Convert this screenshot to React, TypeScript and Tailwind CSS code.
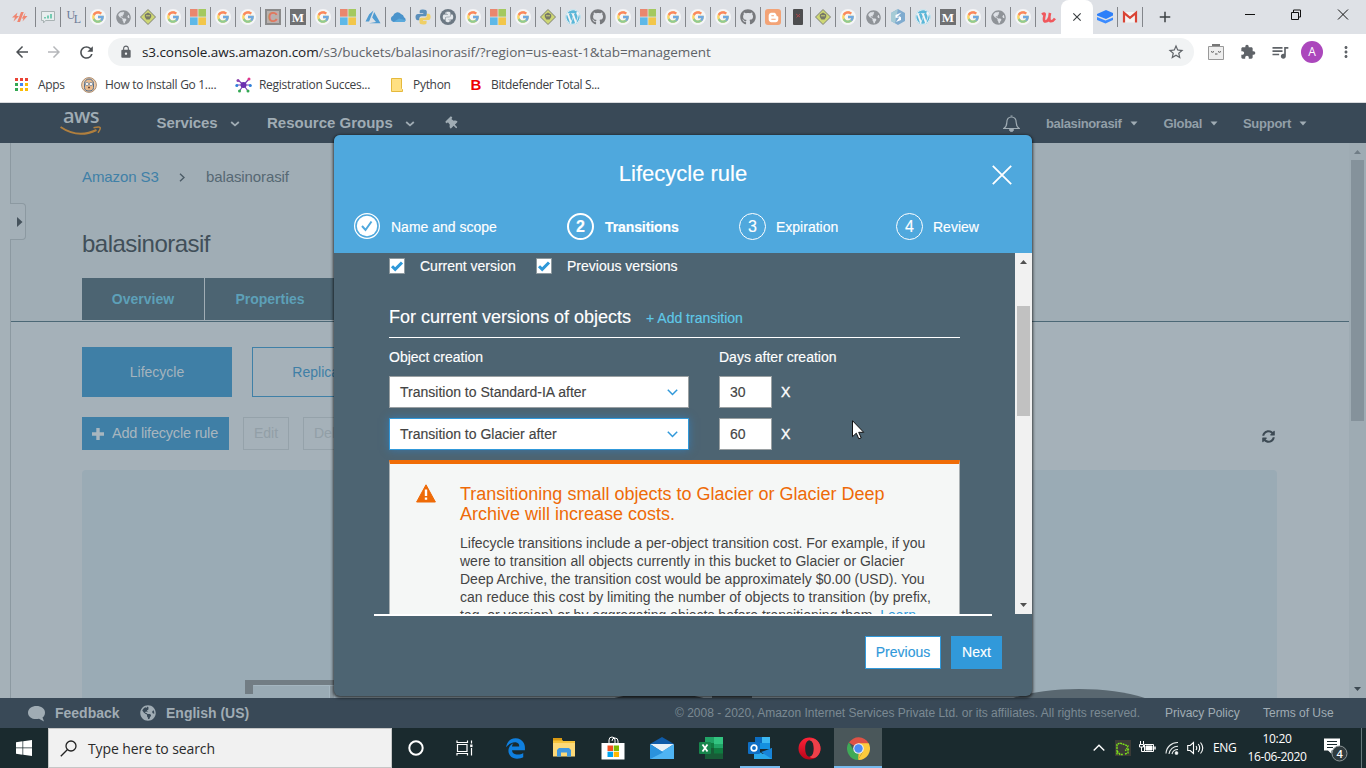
import React from "react";
import { FcGoogle } from "react-icons/fc";
import { FaWordpress, FaGithub, FaGlobeAmericas, FaBloggerB, FaThumbtack, FaPython, FaSyncAlt } from "react-icons/fa";
import { FaEdgeLegacy } from "react-icons/fa6";
import { MdExtension, MdQueueMusic, MdStarBorder, MdLock, MdArrowBack, MdArrowForward, MdRefresh, MdMoreVert, MdClose, MdAdd } from "react-icons/md";

const seg = "font-['Open_Sans','Noto_Sans',sans-serif]";

/* ---------- tab strip ---------- */

function Google() {
  return (
    <span className="flex h-4 w-4 items-center justify-center rounded-full bg-white/70">
      <FcGoogle size={14} className="opacity-60" />
    </span>
  );
}

function Windows() {
  return (
    <svg width="16" height="16" viewBox="0 0 16 16" className="opacity-70">
      <path fill="#f0603c" d="M0 0h7.6v7.6H0z" />
      <path fill="#8cbf26" d="M8.4 0H16v7.6H8.4z" />
      <path fill="#28a8ea" d="M0 8.4h7.6V16H0z" />
      <path fill="#fbbc09" d="M8.4 8.4H16V16H8.4z" />
    </svg>
  );
}

function Sign() {
  return (
    <svg width="16" height="16" viewBox="0 0 16 16" className="opacity-75">
      <path d="M8 .5 15.500 8 8 15.500.5 8z" fill="#c9d44e" stroke="#5f6050" strokeWidth="1" />
      <path d="M4.800 5.500 8 3.600l3.200 1.900V8L9.600 10.500H6.400L4.800 8z" fill="#55563f" />
      <path d="M6 6.800h4M7 12h2" stroke="#c9d44e" strokeWidth="1" />
    </svg>
  );
}

const Globe = () => <FaGlobeAmericas size={15} className="text-[#8f9398]" />;
const Medium = () => (
  <span className="flex h-4 w-4 items-center justify-center bg-[#6f7072] font-['Liberation_Serif',serif] text-[13px] leading-none font-bold text-white">M</span>
);
const Wp = () => <FaWordpress size={16} className="rounded-full bg-white/60 text-[#5bb7d8]" />;
const Git = () => <FaGithub size={16} className="text-[#77797d]" />;

function Favicon({ kind }: { kind: string }) {
  switch (kind) {
    case "g": return <Google />;
    case "ms": return <Windows />;
    case "sign": return <Sign />;
    case "globe": return <Globe />;
    case "m": return <Medium />;
    case "wp": return <Wp />;
    case "gh": return <Git />;
    case "slash":
      return (
        <svg width="16" height="16" viewBox="0 0 16 16" className="-ml-1.5" fill="#ef8570"><path d="M0 8.500 5.500 3.500 4.500 7H7L1.500 12.500 3 8.500zM9 3h2.800L8 13H5.200zM13.500 3.500 12.500 7H15.500L10.500 12.500 11.500 9.500H9.800z" /></svg>
      );
    case "chart":
      return (
        <svg width="16" height="16" viewBox="0 0 16 16" fill="none"><path d="M1.500 2.500h13v9h-9l-2 2.500v-2.500h-2z" fill="#e8eeee" stroke="#a9b3b4" /><path d="M5 9.500V8M8 9.500V6.500M11 9.500V5" stroke="#58c2a3" strokeWidth="1.600" /></svg>
      );
    case "ul":
      return (
        <span className="flex font-['Liberation_Serif',serif] text-[12px] leading-none tracking-[-1.5px] text-[#6d7a96]"><span>U</span><span className="pt-1">L</span></span>
      );
    case "c":
      return <span className="flex h-4 w-4 items-center justify-center border-2 border-[#8b8b8b] bg-[#b9b0ae] text-[14px] leading-none font-bold text-[#df7a60]">C</span>;
    case "azure":
      return (
        <svg width="16" height="16" viewBox="0 0 16 16"><path d="M8.500 1.500 4.200 5.300.5 12.500h3.600zM9.200 3l-2 5.400 3.800 4.500-7 1.300h11.500z" fill="#4f9bd1" /></svg>
      );
    case "cloud":
      return (
        <svg width="17" height="16" viewBox="0 0 17 16"><path d="M3.500 13a3.200 3.200 0 0 1-.4-6.200A4.600 4.600 0 0 1 11 4.900a4 4 0 0 1 3 3.300A2.600 2.600 0 0 1 14 13z" fill="#4a93cb" /><path d="M3.500 13 9 9.500l6.800 1.800A2.600 2.600 0 0 1 14 13z" fill="#5aa9dc" /></svg>
      );
    case "py":
      return (
        <svg width="16" height="16" viewBox="0 0 16 16"><path d="M8 .5c-3 0-3.300 1-3.300 2V4.300h3.600v.6H3C1.500 4.900.5 6 .5 8s1 3.300 2.300 3.300h1.600V9.500c0-1.300 1-2.200 2.200-2.200h3.500c1 0 1.700-.8 1.700-1.800v-3C11.800 1.200 10.500.5 8 .5z" fill="#5b8fba" /><path d="M8.300 15.500c3 0 3.300-1 3.300-2v-1.800H8v-.6h5.200c1.400 0 2.400-1 2.400-3.100 0-2-1-3.200-2.300-3.200h-1.500v1.700c0 1.300-1 2.300-2.200 2.300H6.200c-1 0-1.700.8-1.700 1.800v3c0 1.200 1.300 1.900 3.800 1.900z" fill="#efcf66" /></svg>
      );
    case "pyround":
      return <span className="flex h-4 w-4 items-center justify-center rounded-full bg-[#6c7883] text-[#e4e8ec]"><FaPython size={12} /></span>;
    case "blog":
      return <span className="flex h-4 w-4 items-center justify-center rounded-[3px] bg-[#f3a376] text-white"><FaBloggerB size={11} /></span>;
    case "phone":
      return (
        <svg width="16" height="16" viewBox="0 0 16 16"><rect x="3" y="0" width="10" height="16" rx="1" fill="#4d4d4f" /><path d="m6 5 4 3M10 5 6.500 8.500" stroke="#a8494c" /></svg>
      );
    case "hex":
      return (
        <svg width="16" height="16" viewBox="0 0 16 16"><path d="m8 0 7 4v8l-7 4-7-4V4z" fill="#7fabcf" /><path d="M8 0 1 4v8l4 2.200z" fill="#a5cbd6" /><path d="M11.500 3.500 5.500 6v2.800l5-1.800-4.500 6L11 11V8l-5 1z" fill="#fff" /></svg>
      );
    default:
      return (
        <svg width="16" height="16" viewBox="0 0 16 16"><path d="M2 5.500C4 4 5 4 4.600 6S3 12.500 5.500 12.500 9.500 9 10 4c-1 5-.8 8.300 1 8.300S14 11 15 9.500" fill="none" stroke="#f0585d" strokeWidth="2.600" /></svg>
      );
  }
}

const tabs = "slash chart ul g globe sign g ms g g c m g ms azure cloud py pyround g ms g sign wp gh g ms g g g gh blog phone sign g globe hex wp m g globe g u".split(" ");

function TabStrip() {
  return (
    <div className="flex h-[34px] w-full bg-[#dee1e6] pl-[11px]">
      {tabs.map((k, i) => (
        <div key={i} className="flex h-[34px] w-[25px] shrink-0 items-center">
          <div className="flex flex-1 items-center justify-center">
            <Favicon kind={k} />
          </div>
          <div className={i === tabs.length - 1 ? "w-px" : "h-5 w-px bg-[#83868b]"} />
        </div>
      ))}
      <div className="flex h-[34px] w-8 shrink-0 items-center justify-center rounded-t-lg bg-white">
        <MdClose size={14} className="text-[#3c4043]" />
      </div>
      <div className="flex w-[25px] items-center">
        <svg width="24" height="18" viewBox="0 0 24 18"><path d="M4 6 13 2l7 3v2.500l-7 3.500-9-3.500z" fill="#2d7ff9" /><path d="m4 9 8.500 3.500L20 9.500v2.500l-7.500 3.500L4 12z" fill="#3b8bff" /></svg>
        <div className="h-5 w-px bg-[#83868b]" />
      </div>
      <div className="flex w-[25px] items-center">
        <svg width="24" height="16" viewBox="0 0 24 16"><path d="M5 3h14v10.500H5z" fill="#f3f3f3" /><path d="M6 13.500V3.800l6 5 6-5v9.700" fill="none" stroke="#d94334" strokeWidth="2.200" /></svg>
        <div className="h-5 w-px bg-[#83868b]" />
      </div>
      <div className="flex w-[44px] items-center justify-center"><MdAdd size={18} className="text-[#3c4043]" /></div>
      <div className="flex flex-1 justify-end pr-[17px]">
        <svg width="104" height="30" viewBox="0 0 104 30" fill="none" stroke="#111" strokeWidth="1">
          <path d="M0 14.500h10M46.500 12.500h7v7h-7zM48.500 12v-2h7v7h-2M93 9.500l10 10M103 9.500l-10 10" />
        </svg>
      </div>
    </div>
  );
}

function Toolbar() {
  return (
    <div className="flex h-9 w-full items-center bg-white text-[#5f6368]">
      <div className="flex w-[108px] items-center gap-[14px] pl-[13px]">
        <MdArrowBack size={18} className="text-[#4c5054]" />
        <MdArrowForward size={18} className="text-[#b5b7ba]" />
        <MdRefresh size={19} className="text-[#4c5054]" />
      </div>
      <div className="flex h-7 w-[1086px] items-center rounded-full bg-[#f1f3f4] pr-[9px] pl-[11px]">
        <MdLock size={14} />
        <div className={`flex-1 pl-[9px] text-[13.5px] tracking-[-0.075px] whitespace-nowrap ${seg}`}>
          <span className="text-[#202124]">s3.console.aws.amazon.com</span>/s3/buckets/balasinorasif/?region=us-east-1&amp;tab=management
        </div>
        <MdStarBorder size={18} />
      </div>
      <div className="flex flex-1 items-center pl-[14px]">
        <svg width="16" height="16" viewBox="0 0 16 16" fill="none"><path d="M4 1h8" stroke="#777" strokeWidth="2" /><path d="M.5 2.500h15v13H.5z" fill="#eee" stroke="#999" /><path d="M3 7.500q1.500 1.500 3 0M10 7.500q1.500 1.500 3 0M7 10h2.500" stroke="#555" /></svg>
        <MdExtension size={16} className="ml-4" />
        <MdQueueMusic size={20} className="ml-[14px]" />
        <span className={`ml-[11px] flex h-[22px] w-[22px] items-center justify-center rounded-full bg-[#ab47bc] text-[12px] text-white ${seg}`}>A</span>
        <MdMoreVert size={18} className="ml-[14px]" />
      </div>
    </div>
  );
}

function Bookmarks() {
  return (
    <div className={`flex h-[33px] w-full items-center border-b border-[#d8dadd] bg-white pb-[3px] text-[12px] tracking-[-0.3px] whitespace-nowrap text-[#3c4043] ${seg}`}>
      <div className="flex w-[81px] items-center pl-[15px]">
        <svg width="13" height="13" viewBox="0 0 13 13">
          <path fill="#ea4335" d="M0 0h3v3H0zM5 0h3v3H5zM10 0h3v3h-3z" />
          <path fill="#34a853" d="M0 5h3v3H0zM0 10h3v3H0z" />
          <path fill="#4285f4" d="M5 5h3v3H5z" />
          <path fill="#fbbc05" d="M10 5h3v3h-3zM5 10h3v3H5zM10 10h3v3h-3z" />
        </svg>
        <span className="pl-[10px]">Apps</span>
      </div>
      <div className="flex w-[154px] items-center">
        <svg width="16" height="16" viewBox="0 0 16 16"><circle cx="8" cy="8" r="7.400" fill="#f0cfae" stroke="#b08f70" /><path d="M3.500 6.500a4.500 4.500 0 0 1 9 0v4a4.500 3.500 0 0 1-9 0z" fill="#e8b98c" stroke="#54708f" /><circle cx="6" cy="7" r="1.600" fill="#fff" stroke="#54708f" strokeWidth=".6" /><circle cx="10" cy="7" r="1.600" fill="#fff" stroke="#54708f" strokeWidth=".6" /><path d="M7 10.500h2" stroke="#6c4a36" strokeWidth="1.300" /></svg>
        <span className="pl-2">How to Install Go 1....</span>
      </div>
      <div className="flex w-[154px] items-center">
        <svg width="17" height="16" viewBox="0 0 17 16" strokeWidth="1.200"><path d="M8.500 8 3 3M8.500 8 14 2M8.500 8H1.500M8.500 8h7M8.500 8l-4 6M8.500 8l4.500 6" stroke="#7a3bb5" /><circle cx="8.500" cy="8" r="3" fill="#6b2fb0" /><circle cx="14" cy="2" r="1.500" fill="#e0358a" /><circle cx="3" cy="3.500" r="1.500" fill="#8e44ad" /><circle cx="1.800" cy="8.500" r="1.500" fill="#2f80d9" /><circle cx="15.300" cy="8.500" r="1.500" fill="#2f80d9" /><circle cx="4.500" cy="14" r="1.500" fill="#32a852" /><circle cx="13" cy="14" r="1.500" fill="#32a852" /></svg>
        <span className="pl-[7px]">Registration Succes...</span>
      </div>
      <div className="flex w-[79px] items-center">
        <svg width="15" height="16" viewBox="0 0 15 16"><path d="M2.500 1.500h10v10l1 1v2h-11z" fill="#ffe082" stroke="#e5b93c" /></svg>
        <span className="pl-[9px]">Python</span>
      </div>
      <div className="flex items-center">
        <span className="w-4 text-center font-['Liberation_Sans',sans-serif] text-[15px] leading-4 font-black tracking-normal text-[#ed0000]">B</span>
        <span className="pl-[7px] tracking-[-0.35px]">Bitdefender Total S...</span>
      </div>
    </div>
  );
}

/* ---------- console ---------- */

const Caret = () => <svg width="8" height="5" viewBox="0 0 8 5"><path d="M.5.500h7L4 4.500z" fill="#a0acb4" /></svg>;
const Vee = () => <svg width="10" height="6" viewBox="0 0 10 6"><path d="m1.200 1 3.800 3.400L8.800 1" fill="none" stroke="#a0acb4" strokeWidth="1.800" /></svg>;

function AwsNav() {
  return (
    <div className="flex h-10 w-full shrink-0 items-center bg-[#394957] font-bold text-[#a0acb4]">
      <div className="flex w-[156.5px] flex-col pl-[60px]">
        <span className="h-[17px] w-[42px] text-center font-['Open_Sans',sans-serif] text-[20px] leading-[14px] font-semibold tracking-[-0.5px]">aws</span>
        <svg width="42" height="11" viewBox="0 0 42 11"><path d="M.5 1C13 9.500 26 9 36.500 4" stroke="#b07f3e" strokeWidth="2" fill="none" /><path d="M33.500 1.800c4-1 6-1 6.500-.3s-.3 3-2 5.200" stroke="#b07f3e" strokeWidth="1.600" fill="none" /></svg>
      </div>
      <span className="w-[61.500px] text-[15px] tracking-[-0.1px]">Services</span>
      <span className="w-[49px] pt-px pl-[12px]"><Vee /></span>
      <span className="w-[126px] text-[15px]">Resource Groups</span>
      <span className="w-[53px] pt-px pl-[12px]"><Vee /></span>
      <FaThumbtack size={13} className="-rotate-45" />
      <div className="flex flex-1 items-center justify-end pt-px pr-[59px] text-[13px] font-bold text-[#929fa8]">
        <svg width="17" height="17" viewBox="0 0 17 17" fill="none" className="mr-[26px]"><path d="M.8 13.500h15.400c-2-1.500-3-3-3-6C13.200 4 11.500 2 8.500 2S3.800 4 3.800 7.500c0 3-1 4.500-3 6z" stroke="#a0acb4" strokeWidth="1.200" /><path d="M6.500 14.500h4a2 2 0 0 1-4 0zM7.500 1h2" fill="#a0acb4" stroke="#a0acb4" /></svg>
        <span className="mr-2 tracking-[-0.35px]">balasinorasif</span><Caret />
        <span className="mr-2 ml-[26px] tracking-[-0.35px]">Global</span><Caret />
        <span className="mr-2 ml-[25px] tracking-[-0.25px]">Support</span><Caret />
      </div>
    </div>
  );
}

function ConsoleBody() {
  return (
    <div className="flex h-[555px] w-full shrink-0 bg-[#a5b1b9]">
      <div className="relative w-[11px] border-r border-[#8c99a1] bg-[#a5b1b8]">
        <div className="absolute top-[60px] left-[10px] flex h-[37px] w-4 items-center justify-center rounded-r border border-l-0 border-[#8c99a1] bg-[#a3afb7]">
          <svg width="6" height="10" viewBox="0 0 6 10" className="ml-1"><path d="M0 0v10l5.500-5z" fill="#45525c" /></svg>
        </div>
      </div>
      <div className="flex w-[1338px] flex-col overflow-hidden">
        <div className="flex h-[179px] shrink-0 flex-col border-b border-[#4c6876] bg-[#a0adb5] pl-[71px]">
          <div className="mt-[24px] flex h-5 items-center text-[15px] text-[#566873]">
            <span className="w-[77px] tracking-[-0.1px] whitespace-nowrap text-[#3f80a7]">Amazon S3</span>
            <svg width="6" height="9" viewBox="0 0 6 9" className="mr-[21px] ml-5"><path d="m1 .8 4 3.700-4 3.700" fill="none" stroke="#4b5b66" strokeWidth="1.400" /></svg>
            <span className="tracking-[-0.1px]">balasinorasif</span>
          </div>
          <div className="mt-[42px] h-[30px] text-[24px] leading-[30px] tracking-[-0.52px] text-[#414f59]">balasinorasif</div>
          <div className="mt-[19px] flex h-[42px] gap-px text-[14px] font-bold text-[#5da0b8]">
            <div className="flex w-[122px] items-center justify-center bg-[#4c6472]">Overview</div>
            <div className="flex w-[130px] items-center justify-center bg-[#4c6472]">Properties</div>
            <div className="w-[130px] bg-[#4c6472]" />
          </div>
        </div>
        <div className="flex flex-1 flex-col pl-[71px]">
          <div className="mt-[25px] flex h-[50px] gap-5 pt-0 text-[14px]">
            <div className="flex w-[150px] items-center justify-center bg-[#3f7fa6] pt-px text-[#a5b4bd]">Lifecycle</div>
            <div className="flex w-[150px] items-center justify-center border border-[#3f80a7] text-[#3f7fa6]">Replication</div>
          </div>
          <div className="mt-5 flex h-[33px] items-center text-[14.5px] text-[#929fa7]">
            <div className="flex h-[33px] w-[147px] items-center bg-[#3f7fa6] pl-[10px] tracking-[-0.2px] whitespace-nowrap text-[#a8b6bf]">
              <svg width="12" height="12" viewBox="0 0 12 12" className="mr-2"><path d="M6 0v12M0 6h12" stroke="#a8b6bf" strokeWidth="3.400" /></svg>
              Add lifecycle rule
            </div>
            <div className="ml-[14px] flex h-[33px] w-[46px] items-center justify-center border border-[#95a2aa] text-[14px]">Edit</div>
            <div className="ml-[14px] flex h-[33px] w-[62px] items-center border border-[#95a2aa] pl-[10px] text-[14px]">Delete</div>
            <FaSyncAlt size={13} className="mt-[6px] ml-[897px] text-[#3d4a54]" />
          </div>
          <div className="mt-5 flex w-[1195px] flex-1 items-end rounded-t bg-[#9aabb5]">
            <svg width="1195" height="20" viewBox="0 0 1195 20">
              <path d="M163 2h92v5h-84v9h-8z" fill="#727d84" />
              <path d="M171.500 7.500h76v13h-76" fill="none" stroke="#a5b6c0" />
              <path d="M248 8h4v12h-4z" fill="#8a979f" />
              <ellipse cx="577" cy="31" rx="62" ry="16" fill="#3a444b" />
              <path d="M630 17h40v3h-40z" fill="#4d585f" />
              <ellipse cx="997" cy="41" rx="92" ry="30" fill="#596770" />
            </svg>
          </div>
        </div>
      </div>
      <div className="flex w-[17px] flex-col items-center bg-[#9eabb3]">
        <svg width="17" height="17" viewBox="0 0 17 17"><path d="M5 11h7L8.500 7z" fill="#707d86" /></svg>
        <div className="h-[261px] w-[13px] bg-[#85929b]" />
        <div className="flex-1" />
        <svg width="17" height="17" viewBox="0 0 17 17"><path d="M5 6h7l-3.500 4z" fill="#3d4952" /></svg>
      </div>
    </div>
  );
}

function AwsFooter() {
  return (
    <div className="flex h-[30px] w-full shrink-0 items-center bg-[#394957] pl-[28px] text-[13px] whitespace-nowrap text-[#a0acb4]">
      <svg width="17" height="17" viewBox="0 0 17 17" className="mr-[10px]"><path d="M8.500 1C13 1 17 3.500 17 7.500c0 2.500-1 4-2.500 5L16 16.500l-5-2.700C4.500 15 0 12 0 7.700 0 3.500 4 1 8.500 1z" fill="#a0acb4" /></svg>
      <span className="w-[85px] text-[14px] font-bold">Feedback</span>
      <FaGlobeAmericas size={16} className="mr-[10px]" />
      <span className="w-[509px] text-[14px] font-bold">English (US)</span>
      <span className="w-[490px] text-[12px] tracking-[-0.005px] text-[#7b8993]">© 2008 - 2020, Amazon Internet Services Private Ltd. or its affiliates. All rights reserved.</span>
      <span className="w-[98px] text-[12px]">Privacy Policy</span>
      <span className="text-[12px]">Terms of Use</span>
    </div>
  );
}

/* ---------- modal ---------- */

function Check({ gap, label }: { gap: string; label: string }) {
  return (
    <div className={`flex items-center ${gap}`}>
      <svg width="16" height="16" viewBox="0 0 16 16" className="mr-[15px]"><path d="M.5.500h15v15H.5z" fill="#fff" stroke="#8f9a9f" /><path d="m3 8.200 3.200 3.200L13 4.500" fill="none" stroke="#2e98d8" strokeWidth="3" /></svg>
      <span>{label}</span>
    </div>
  );
}

function Step({ n, label, width, state }: { n: string; label: string; width: string; state: string }) {
  return (
    <div className={`flex items-center ${width}`}>
      {state === "done" ? (
        <svg width="27" height="27" viewBox="0 0 27 27" className="mr-[10px]"><circle cx="13" cy="13" r="12.400" fill="none" stroke="#fff" strokeWidth="1.200" /><circle cx="13" cy="13" r="10.200" fill="#fff" /><path d="m8 13 3.500 4L17.500 8.500" fill="none" stroke="#4fa8dd" strokeWidth="2" /></svg>
      ) : (
        <span className={state === "on" ? "mr-[11px] flex h-[27px] w-[27px] items-center justify-center rounded-full border-2 border-white text-[16px] font-bold" : "mr-[10px] flex h-[27px] w-[27px] items-center justify-center rounded-full border border-white text-[16px]"}>{n}</span>
      )}
      <span className={state === "on" ? "pt-px font-bold tracking-[-0.1px]" : "pt-px"}>{label}</span>
    </div>
  );
}

function Row({ label, days, focus }: { label: string; days: string; focus?: boolean }) {
  return (
    <div className="mb-[10px] flex h-8 items-center">
      <div className={focus ? "flex h-8 w-[300px] items-center justify-between border border-[#3199da] bg-white pr-[10px] pl-[10px] text-[14px] text-[#444] shadow-[0_0_8px_#3b78a8]" : "flex h-8 w-[300px] items-center justify-between border border-[#9aa0a2] bg-white pr-[10px] pl-[10px] text-[14px] text-[#444]"}>
        <span>{label}</span>
        <svg width="11" height="7" viewBox="0 0 11 7"><path d="m.8.800 4.700 4.700L10.200.800" fill="none" stroke="#3199da" strokeWidth="1.500" /></svg>
      </div>
      <div className="ml-[30px] flex h-8 w-[53px] items-center border border-[#9aa0a2] bg-white pl-[10px] text-[14px] text-[#444]">{days}</div>
      <span className="ml-[9px] text-[14px] [-webkit-text-stroke:0.4px_white]">X</span>
    </div>
  );
}

function Modal() {
  return (
    <div className="absolute top-[135px] left-[334px] flex h-[561px] w-[698px] flex-col rounded-md bg-[#4d6472] text-[14px] text-white shadow-[0_1px_3px_1px_rgba(0,0,0,0.65)] [-webkit-text-stroke:0.15px]">
      <div className="flex h-[118px] shrink-0 flex-col rounded-t-md bg-[#4fa8dd]">
        <div className="flex h-[78px] items-center pr-[20px] pl-[40px]">
          <div className="-mt-0.5 flex-1 text-center text-[22px]">Lifecycle rule</div>
          <svg width="20" height="20" viewBox="0 0 20 20" className="mt-[2px]"><path d="m.8.800 18.400 18.400M19.200.800.8 19.200" stroke="#fff" strokeWidth="1.800" /></svg>
        </div>
        <div className="flex h-[27px] items-center pl-[20px]">
          <Step n="1" label="Name and scope" width="w-[213px]" state="done" />
          <Step n="2" label="Transitions" width="w-[172px]" state="on" />
          <Step n="3" label="Expiration" width="w-[157px]" state="off" />
          <Step n="4" label="Review" width="w-[120px]" state="off" />
        </div>
      </div>
      <div className="flex h-[361px] shrink-0">
        <div className="flex w-[681px] flex-col overflow-hidden pt-[5px] pl-[55px]">
          <div className="flex h-4 items-center">
            <Check gap="w-[147px]" label="Current version" />
            <Check gap="w-[160px]" label="Previous versions" />
          </div>
          <div className="mt-[31px] flex h-[33px] w-[571px] shrink-0 items-start border-b border-white">
            <span className="w-[257px] text-[18px] leading-6">For current versions of objects</span>
            <span className="pt-px text-[14px] leading-6 text-[#5fc9e8]">+ Add transition</span>
          </div>
          <div className="mt-[9px] flex h-5 shrink-0 items-center leading-5">
            <span className="w-[330px]">Object creation</span>
            <span>Days after creation</span>
          </div>
          <div className="mt-[9px] shrink-0">
            <Row label="Transition to Standard-IA after" days="30" />
            <Row label="Transition to Glacier after" days="60" focus />
          </div>
          <div className="flex h-[260px] w-[571px] shrink-0 border-x border-t-4 border-x-[#a9b0b3] border-t-[#f06c06] bg-[#f5f7f6] pt-5 pl-[26px] [-webkit-text-stroke:0]">
            <svg width="20" height="19" viewBox="0 0 20 19" className="mr-[24px]"><path d="M10 .8 19.400 18H.6z" fill="#ee6a07" stroke="#ee6a07" strokeLinejoin="round" /><path d="M8.800 5.500h2.400v6.500H8.800zM8.800 13.500h2.400v2.300H8.800z" fill="#fff" /></svg>
            <div className="w-[480px] whitespace-nowrap">
              <div className="text-[18px] leading-5 text-[#ee6a07]">Transitioning small objects to Glacier or Glacier Deep<br />Archive will increase costs.</div>
              <div className="mt-[10px] text-[14px] leading-[18px] text-[#444]">
                Lifecycle transitions include a per-object transition cost. For example, if you<br />
                were to transition all objects currently in this bucket to Glacier or Glacier<br />
                Deep Archive, the transition cost would be approximately $0.00 (USD). You<br />
                can reduce this cost by limiting the number of objects to transition (by prefix,<br />
                tag, or version) or by aggregating objects before transitioning them. <span className="text-[#3199da]">Learn</span>
              </div>
            </div>
          </div>
        </div>
        <div className="flex w-[17px] flex-col items-center bg-[#f1f1f1]">
          <svg width="17" height="17" viewBox="0 0 17 17"><path d="M5 11h7L8.500 7z" fill="#505050" /></svg>
          <div className="mt-9 h-[110px] w-[13px] bg-[#c1c1c1]" />
          <div className="flex-1" />
          <svg width="17" height="17" viewBox="0 0 17 17"><path d="M5 6h7l-3.500 4z" fill="#505050" /></svg>
        </div>
      </div>
      <div className="ml-10 h-0.5 w-[618px] shrink-0 bg-white" />
      <div className="mt-5 mr-[30px] flex h-[33px] justify-end gap-[10px]">
        <div className="flex w-[76px] items-center justify-center border border-[#3199da] bg-white text-[#3199da]">Previous</div>
        <div className="flex w-[51px] items-center justify-center bg-[#3199da]">Next</div>
      </div>
    </div>
  );
}

/* ---------- taskbar ---------- */

function TaskItem({ children, mode }: { children: React.ReactNode; mode?: string }) {
  return (
    <div className={mode === "active" ? "flex h-10 w-12 shrink-0 flex-col items-center bg-[#4a575a]" : "flex h-10 w-12 shrink-0 flex-col items-center"}>
      <div className="flex h-[38px] items-center justify-center pt-0.5">{children}</div>
      {mode === "active" && <div className="h-0.5 w-12 bg-[#76b9ed]" />}
      {mode === "open" && <div className="h-0.5 w-10 bg-[#76b9ed]" />}
    </div>
  );
}

function Taskbar() {
  return (
    <div className={`flex h-10 w-full shrink-0 items-center bg-[#1a2a2e] text-white ${seg}`}>
      <div className="flex w-12 items-center justify-center">
        <svg width="16" height="16" viewBox="0 0 16 16" fill="#fff"><path d="M0 2.200 6.500 1.300v6.300H0zM7.200 1.200 16 0v7.600H7.200zM0 8.300h6.500v6.400L0 13.800zM7.200 8.300H16V16l-8.800-1.200z" /></svg>
      </div>
      <div className="flex h-10 w-[344px] items-center border border-[#c6c6c6] bg-[#f1f1f1] text-[#2b2b2b]">
        <svg width="17" height="17" viewBox="0 0 17 17" className="ml-[11px]" fill="none" stroke="#222" strokeWidth="1.300"><circle cx="11" cy="6" r="5" /><path d="M7.500 9.500.8 16.200" /></svg>
        <span className="pl-[11px] text-[14px] tracking-[-0.1px]">Type here to search</span>
      </div>
      <TaskItem><svg width="18" height="18" viewBox="0 0 18 18"><circle cx="9" cy="9" r="6.700" fill="none" stroke="#fff" strokeWidth="2" /></svg></TaskItem>
      <TaskItem>
        <svg width="17" height="16" viewBox="0 0 17 16" fill="none" stroke="#fff" strokeWidth="1.200"><path d="M1.500 4.500h9.500v7H1.500zM1 .5v2h10.500v-2M1 15.500v-2h10.500v2M15.500.500v3M15.500 8v7.500" /><path d="M14.200 4.500h2.300v2.600h-2.300z" fill="#fff" stroke="none" /></svg>
      </TaskItem>
      <div className="w-[3px] shrink-0" />
      <TaskItem><FaEdgeLegacy size={21} className="text-[#0f7fde]" /></TaskItem>
      <div className="w-px shrink-0" />
      <TaskItem>
        <svg width="22" height="20" viewBox="0 0 22 20"><path d="M0 1h8.500l1.500 2H22v15H0z" fill="#f5c33b" /><path d="M0 5h22v13.500H0z" fill="#fcd978" /><path d="M0 0h9v2.500H0z" fill="#d99a13" /><path d="M4 18.500v-6.500l2-2h10l2 2v6.500h-4v-4H8v4z" fill="#3f97e0" /></svg>
      </TaskItem>
      <div className="w-px shrink-0" />
      <TaskItem>
        <svg width="24" height="24" viewBox="0 0 24 24"><path d="M8 8V4a3 3 0 0 1 6 0v3M11 5a3 3 0 0 1 6 0v3" fill="none" stroke="#fff" /><path d="M.5 7h23v16.500h-23z" fill="#fff" /><path d="M6.500 9.500H12V15H6.500z" fill="#f25022" /><path d="M12.700 9.500H18V15h-5.300z" fill="#7fba00" /><path d="M6.500 15.700H12V21H6.500z" fill="#00a4ef" /><path d="M12.700 15.700H18V21h-5.300z" fill="#ffb900" /></svg>
      </TaskItem>
      <div className="w-px shrink-0" />
      <TaskItem>
        <svg width="24" height="22" viewBox="0 0 24 22"><path d="M0 7 12 0l12 7-12 8z" fill="#0f5ba8" /><path d="M0 7h24L12 15z" fill="#e8f1f7" /><path d="M0 7v15h24z" fill="#2b8fdc" /><path d="M24 7v15H0z" fill="#4fb4f3" /><path d="m0 7 13 8.500L0 22z" fill="#2a92dd" /></svg>
      </TaskItem>
      <div className="w-px shrink-0" />
      <TaskItem>
        <svg width="24" height="22" viewBox="0 0 24 22"><path d="M6 0h18v22H6z" fill="#21a366" /><path d="M15 0h9v7h-9z" fill="#33c481" /><path d="M6 6h9v5H6z" fill="#107c41" /><path d="M6 11h18v11H6z" fill="#185c37" /><path d="M15 11h9v5.500h-9z" fill="#107c41" /><rect y="5" width="12" height="12" rx="1" fill="#17864c" /><path d="m3.500 7.500 5 7M8.500 7.500l-5 7" stroke="#fff" strokeWidth="1.800" /></svg>
      </TaskItem>
      <div className="w-px shrink-0" />
      <TaskItem mode="open">
        <svg width="24" height="22" viewBox="0 0 24 22"><path d="M7 0h15v12H7z" fill="#1490df" /><path d="M14 0h8v6h-8z" fill="#3cb8f2" /><path d="M7 0h7v6H7z" fill="#0b6cc0" /><path d="m6 12 9 5 9-6v11H6z" fill="#28a8ea" /><path d="m13 15 11-4v11z" fill="#1784d8" /><rect y="5" width="12" height="12" rx="1" fill="#0f6fc5" /><circle cx="6" cy="11" r="2.800" fill="none" stroke="#fff" strokeWidth="1.700" /></svg>
      </TaskItem>
      <div className="w-px shrink-0" />
      <TaskItem>
        <svg width="23" height="23" viewBox="0 0 23 23"><defs><linearGradient id="op" x1="0" x2="0" y1="0" y2="1"><stop offset="0" stopColor="#ff2338" /><stop offset="1" stopColor="#b8051a" /></linearGradient></defs><path d="M11.500.500a11 11 0 1 0 0 22 11 11 0 0 0 0-22zm0 2.800c2.900 0 4.300 3.600 4.300 8.200s-1.400 8.200-4.300 8.200-4.300-3.600-4.300-8.200 1.400-8.200 4.300-8.200z" fill="url(#op)" fillRule="evenodd" /><path d="M11.500 3.300C13.500 1.500 16.500 1.500 19 3.500c4.700 4.500 4.700 11.500 0 16-2.500 2-5.500 2-7.500.2 2.900 0 4.300-3.600 4.300-8.200s-1.400-8.200-4.300-8.200z" fill="#ee4049" /></svg>
      </TaskItem>
      <div className="w-px shrink-0" />
      <TaskItem mode="active">
        <svg width="23" height="23" viewBox="0 0 24 24"><path d="M12 12 2 5.800A12 12 0 0 1 22.500 6.500z" fill="#de5246" /><path d="M12 6.500h10.700A12 12 0 0 1 11.500 24l5.300-9.200z" fill="#fccb3d" /><path d="M2 5.500 7.200 14.700 12 17.500 11.800 24A12 12 0 0 1 2 5.500z" fill="#3faa57" /><path d="M12 17.500 16.800 14.700 11.500 24z" fill="#fccb3d" /><circle cx="12" cy="12" r="5.500" fill="#f1f1f1" /><circle cx="12" cy="12" r="4.400" fill="#4c8bf5" /></svg>
      </TaskItem>
      <div className="flex flex-1 items-center text-[12px] leading-none tracking-[-0.3px]">
        <svg width="12" height="8" viewBox="0 0 12 8" className="ml-[211px]"><path d="m.7 6.500 5.300-5.300 5.300 5.300" fill="none" stroke="#fff" strokeWidth="1.400" /></svg>
        <svg width="16" height="16" viewBox="0 0 16 16" className="ml-[10px]"><path d="M0 0h16v16H0z" fill="#3b3b37" /><path d="M2 14.500V4.500L5 3l8 3-1.500 3M2 11l3 3.500h3M14 9l-4 1.500M10 14l3-1V10" fill="none" stroke="#7be01a" strokeWidth="1.400" strokeDasharray="2 .7" /></svg>
        <svg width="17" height="14" viewBox="0 0 17 14" className="ml-2" fill="none" stroke="#fff"><path d="M5.500 3.500h9v7h-9zM1.500 0v3M4.500 0v3M.5 3.500h4v2.500h-4zM2.500 6v4.500h3" /><path d="M7 5h6v4H7z" fill="#fff" /><path d="M16 5.500v3" strokeWidth="1.500" /></svg>
        <svg width="14" height="14" viewBox="0 0 14 14" className="ml-[9px]" fill="none" stroke="#e8ecec" strokeWidth="1.100"><path d="M1 12.500A11.500 11.500 0 0 1 13 1.500M4 13a9 9 0 0 1 9-7.800M7 13a6 6 0 0 1 6-4.500" /><circle cx="11.500" cy="12" r="1.300" fill="#fff" /></svg>
        <svg width="17" height="14" viewBox="0 0 17 14" className="ml-[8px]" fill="none" stroke="#fff" strokeWidth="1.100"><path d="M.7 4.500h2.500L6.500 1.500v11L3.200 9.500H.7zM9 5q1.500 2 0 4M11.200 3q3 4 0 8M13.500 1.500q4.500 5.500 0 11" /></svg>
        <span className="ml-[9px] w-[34px]">ENG</span>
        <div className="flex w-[60px] flex-col items-center gap-[6px] pb-px tracking-[-0.35px]"><span>10:20</span><span>16-06-2020</span></div>
        <svg width="26" height="26" viewBox="0 0 26 26" className="mt-[3px] ml-[17px]"><path d="M0 1.500h16v12H7.500v3.300L4 13.500H0z" fill="#fff" /><path d="M3 4.500h10M3 7.500h10M3 10.500h6" stroke="#1a2a2e" /><circle cx="15.500" cy="16.500" r="7.500" fill="#303b3e" stroke="#8d9698" /><text x="15.500" y="20.500" textAnchor="middle" fontSize="11" fontWeight="600" fill="#fff">4</text></svg>
        <div className="flex-1" />
        <div className="mr-1 h-10 w-px bg-[#66777a]" />
      </div>
    </div>
  );
}

export default function App() {
  return (
    <div className="relative flex h-[768px] w-[1366px] flex-col overflow-hidden bg-white font-['Liberation_Sans',Arial,sans-serif]">
      <TabStrip />
      <Toolbar />
      <Bookmarks />
      <AwsNav />
      <ConsoleBody />
      <AwsFooter />
      <Taskbar />
      <Modal />
      <svg width="13" height="20" viewBox="0 0 13 20" className="absolute top-[420px] left-[852px]"><path d="M.5.700v16l3.800-3.500 2.500 5.600 2.400-1-2.500-5.500h5z" fill="#fff" stroke="#111" /></svg>
    </div>
  );
}
